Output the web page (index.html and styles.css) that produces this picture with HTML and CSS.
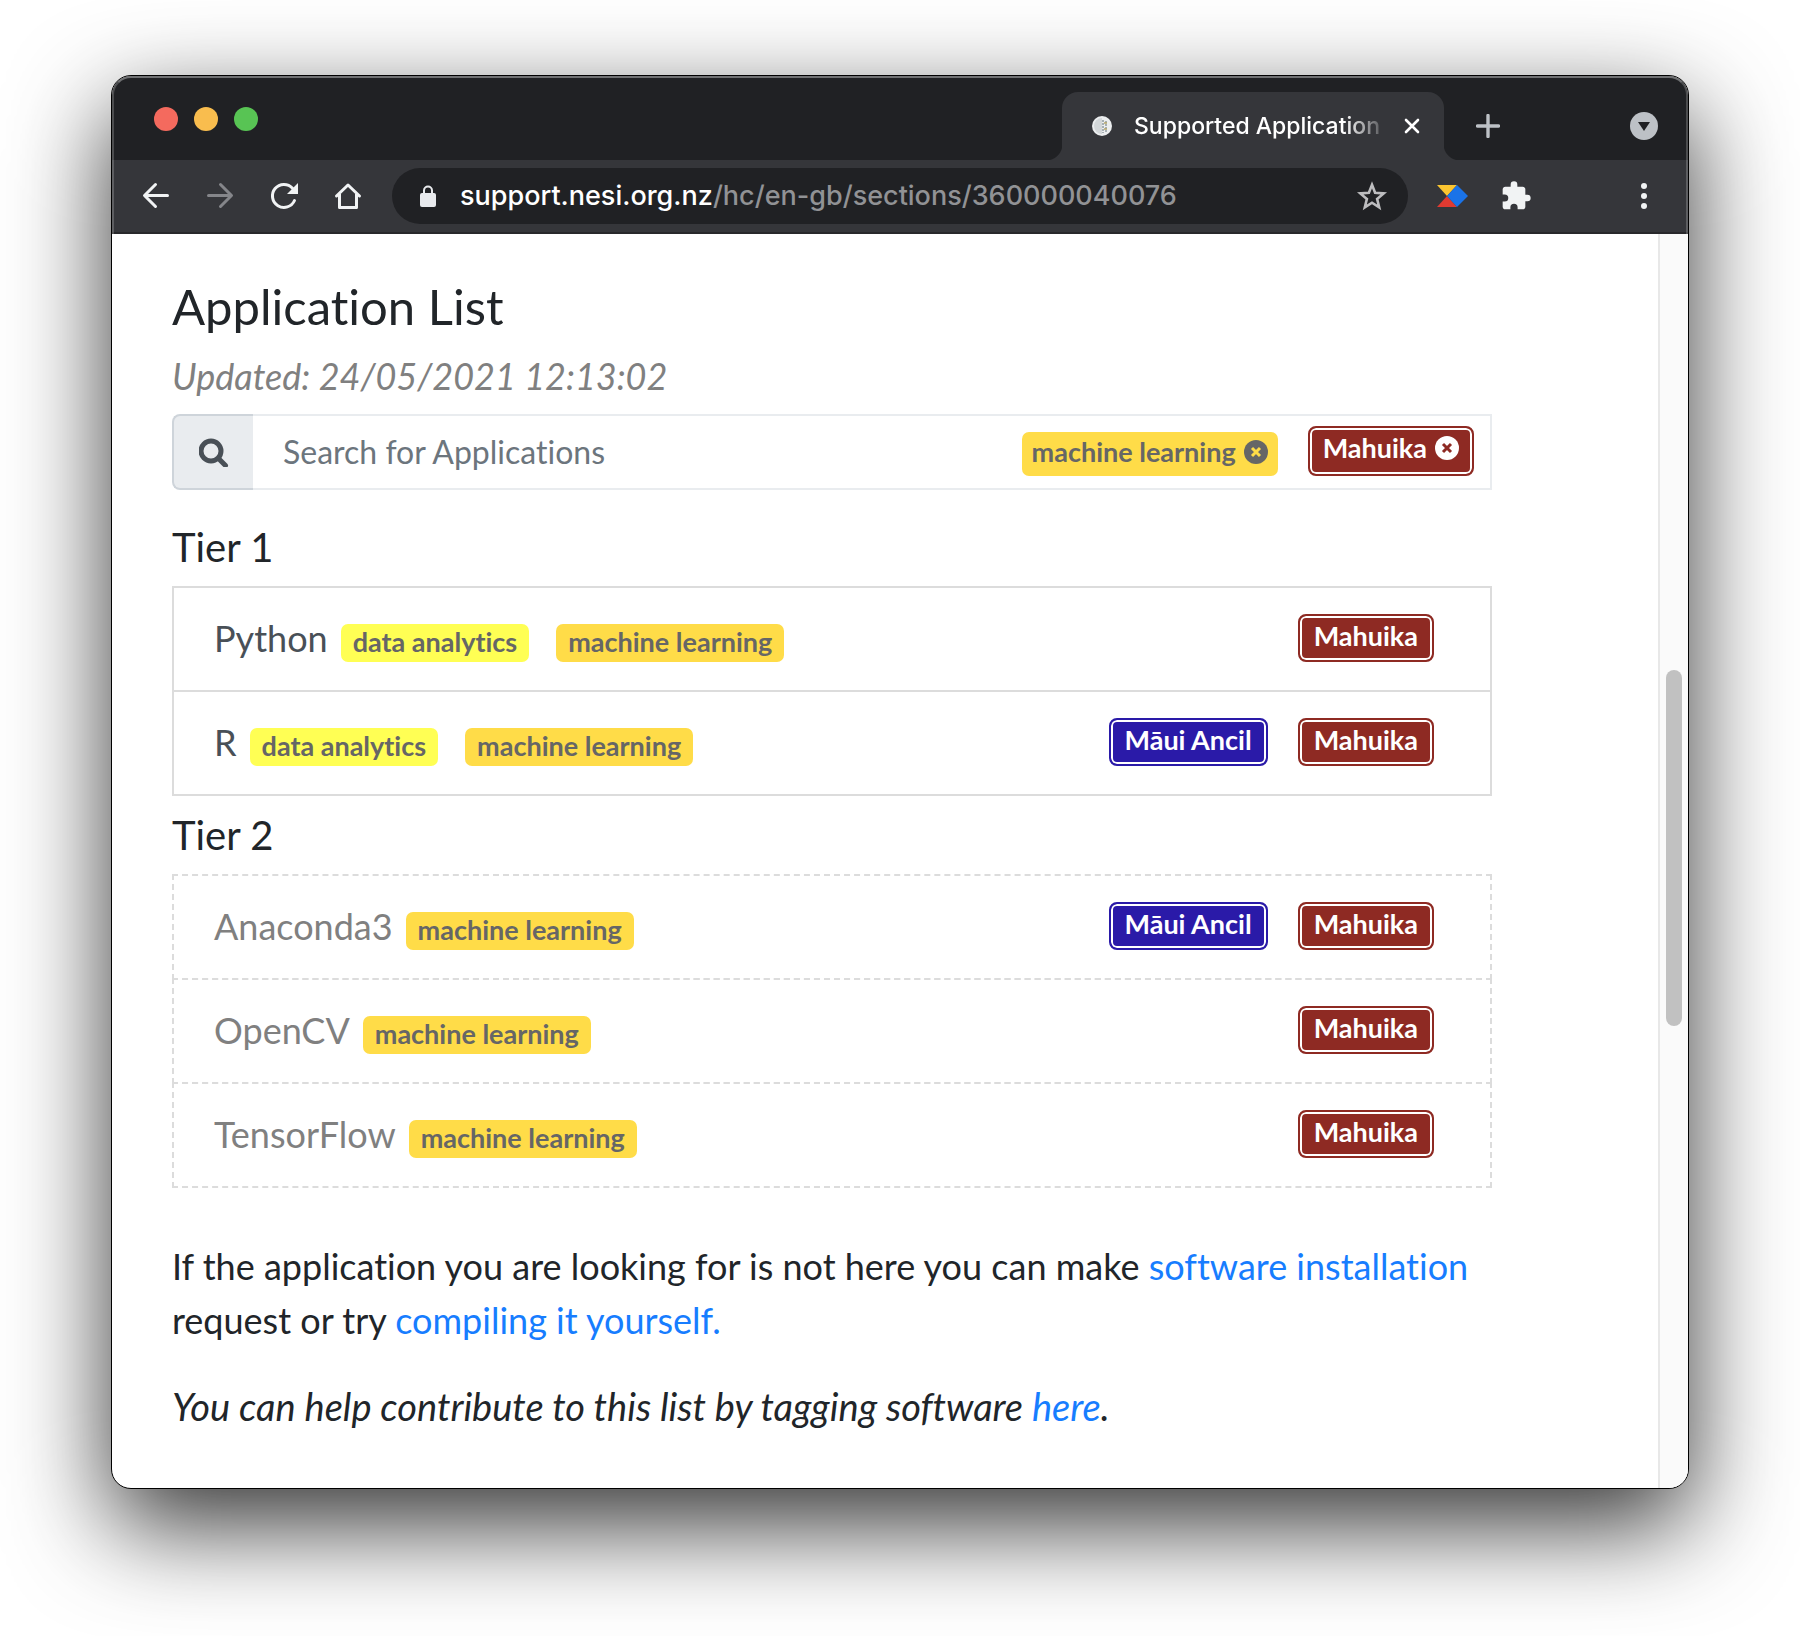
FILE: index.html
```html
<!DOCTYPE html>
<html lang="en-GB">
<head>
<meta charset="utf-8">
<title>Supported Applications</title>
<link rel="stylesheet" href="styles.css">
</head>
<body>
<div class="window">
  <header class="chrome">
    <div class="tabstrip">
      <div class="lights">
        <span class="light light-close"></span>
        <span class="light light-min"></span>
        <span class="light light-max"></span>
      </div>
      <div class="tab">
        <svg class="favicon" viewBox="0 0 20 20" width="20" height="20" aria-hidden="true">
          <circle cx="10" cy="10" r="10" fill="#eceeef"/>
          <path d="M10 2a8 8 0 0 0 0 16z" fill="#d3d7d9"/>
          <path d="M11 4v13M14 5v11" stroke="#8f9aa0" stroke-width="1.5" stroke-dasharray="2 1"/>
          <path d="M12 7h3M12 13h3" stroke="#b7a66a" stroke-width="1.5"/>
        </svg>
        <span class="tab-title">Supported Application</span>
        <button class="icon-button tab-close" aria-label="Close tab">
          <svg viewBox="0 0 16 16" width="16" height="16"><path d="M2 2l12 12M14 2L2 14" stroke="#fff" stroke-width="2.6" stroke-linecap="round"/></svg>
        </button>
      </div>
      <button class="icon-button new-tab" aria-label="New tab">
        <svg viewBox="0 0 24 24" width="24" height="24"><path d="M12 1.500v21M1.500 12h21" stroke="#bdc1c6" stroke-width="3.400" stroke-linecap="round"/></svg>
      </button>
      <button class="icon-button tab-search" aria-label="Search tabs">
        <svg viewBox="0 0 28 28" width="28" height="28"><circle cx="14" cy="14" r="14" fill="#bdc1c6"/><path d="M8 10h12l-6 9z" fill="#202124"/></svg>
      </button>
    </div>
    <nav class="toolbar" aria-label="Browser">
      <div class="nav-buttons">
        <button class="icon-button" aria-label="Back">
          <svg viewBox="0 0 32 32" width="32" height="32" fill="none" stroke="#f1f3f4" stroke-width="3" stroke-linecap="round" stroke-linejoin="round"><path d="M27.500 15.500H5M15.500 4.500l-11 11 11 11"/></svg>
        </button>
        <button class="icon-button" aria-label="Forward" disabled>
          <svg viewBox="0 0 32 32" width="32" height="32" fill="none" stroke="#85868a" stroke-width="3" stroke-linecap="round" stroke-linejoin="round"><path d="M4.500 15.500H27M16.500 4.500l11 11-11 11"/></svg>
        </button>
        <button class="icon-button" aria-label="Reload">
          <svg viewBox="0 0 32 32" width="32" height="32"><path d="M26.500 20.500A11.500 11.500 0 1 1 24.500 8.200" fill="none" stroke="#f1f3f4" stroke-width="3"  stroke-linecap="round"/><path d="M30 3v11H19z" fill="#f1f3f4"/></svg>
        </button>
        <button class="icon-button" aria-label="Home">
          <svg viewBox="0 0 32 32" width="32" height="32" fill="none" stroke="#f1f3f4" stroke-width="3" stroke-linejoin="round" stroke-linecap="round"><path d="M4.500 16L16 5l11.500 11M7.500 14v13.500h17V14"/></svg>
        </button>
      </div>
      <div class="omnibox">
        <svg class="lock" viewBox="0 0 16 22" width="16" height="22" aria-hidden="true"><rect y="8" width="16" height="14" rx="2" fill="#e8eaed"/><path d="M4 9V5.500a4 4 0 0 1 8 0V9" fill="none" stroke="#e8eaed" stroke-width="2"/></svg>
        <div class="url"><span class="url-host">support.nesi.org.nz</span>/hc/en-gb/sections/360000040076</div>
        <button class="icon-button" aria-label="Bookmark">
          <svg viewBox="0 0 32 32" width="32" height="32" fill="none" stroke="#bdbdbf" stroke-width="2.600"><path d="M16 4.800l3.100 8 8.600.6-6.600 5.500 2.100 8.400-7.200-4.600-7.200 4.600 2.100-8.400-6.600-5.500 8.600-.6z"/></svg>
        </button>
      </div>
      <div class="extensions">
        <button class="icon-button" aria-label="Extension">
          <svg viewBox="0 0 32 32" width="32" height="32"><path d="M1 5h20L11 16z" fill="#fbc530"/><path d="M1 27h20L11 16z" fill="#df3a31"/><path d="M21 5l11 11-11 11-10-11z" fill="#1a73e8"/></svg>
        </button>
        <button class="icon-button" aria-label="Extensions">
          <svg viewBox="0 0 24 24" width="32" height="32"><path fill="#f1f3f4" d="M20.500 11H19V7c0-1.100-.9-2-2-2h-4V3.500a2.500 2.500 0 0 0-5 0V5H4c-1.100 0-2 .9-2 2v3.800h1.500a2.700 2.700 0 0 1 0 5.400H2V20c0 1.100.9 2 2 2h3.800v-1.500a2.700 2.700 0 0 1 5.400 0V22H17c1.100 0 2-.9 2-2v-4h1.500a2.500 2.500 0 0 0 0-5z"/></svg>
        </button>
      </div>
      <button class="icon-button" aria-label="Menu">
        <svg viewBox="0 0 32 32" width="32" height="32" fill="#f1f3f4"><circle cx="16" cy="6" r="3"/><circle cx="16" cy="16" r="3"/><circle cx="16" cy="26" r="3"/></svg>
      </button>
    </nav>
  </header>
  <div class="viewport">
    <main class="page">
      <h1 class="title">Application List</h1>
      <p class="updated">Updated: 24/05/2021 12:13:02</p>
      <form class="search" role="search">
        <label class="search-label" for="search" aria-label="Search">
          <svg viewBox="0 0 30 30" width="30" height="30" aria-hidden="true"><circle cx="12" cy="14" r="10" fill="none" stroke="#495057" stroke-width="5"/><path d="M19.500 21.500l7 7" stroke="#495057" stroke-width="5" stroke-linecap="round"/></svg>
        </label>
        <div class="search-field">
          <input class="search-input" id="search" type="text" placeholder="Search for Applications">
          <button class="tag tag-ml tag-filter" type="button">machine learning
            <svg viewBox="0 0 24 24" width="24" height="24"><circle cx="12" cy="12" r="12" fill="#666"/><path d="M8 8l8 8M16 8l-8 8" stroke="#ffdc48" stroke-width="3"/></svg>
          </button>
          <button class="badge badge-mahuika badge-filter" type="button">Mahuika
            <svg viewBox="0 0 24 24" width="24" height="24"><circle cx="12" cy="12" r="12" fill="#fff"/><path d="M8 8l8 8M16 8l-8 8" stroke="#8e2a23" stroke-width="3"/></svg>
          </button>
        </div>
      </form>

      <h2 class="tier">Tier 1</h2>
      <ul class="apps">
        <li class="app"><span class="app-name">Python</span><button class="tag tag-data">data analytics</button><button class="tag tag-ml">machine learning</button>
          <span class="clusters"><button class="badge badge-mahuika">Mahuika</button></span></li>
        <li class="app"><span class="app-name">R</span><button class="tag tag-data">data analytics</button><button class="tag tag-ml">machine learning</button>
          <span class="clusters"><button class="badge badge-maui">Māui Ancil</button><button class="badge badge-mahuika">Mahuika</button></span></li>
      </ul>

      <h2 class="tier">Tier 2</h2>
      <ul class="apps apps-minor">
        <li class="app"><span class="app-name">Anaconda3</span><button class="tag tag-ml">machine learning</button>
          <span class="clusters"><button class="badge badge-maui">Māui Ancil</button><button class="badge badge-mahuika">Mahuika</button></span></li>
        <li class="app"><span class="app-name">OpenCV</span><button class="tag tag-ml">machine learning</button>
          <span class="clusters"><button class="badge badge-mahuika">Mahuika</button></span></li>
        <li class="app"><span class="app-name">TensorFlow</span><button class="tag tag-ml">machine learning</button>
          <span class="clusters"><button class="badge badge-mahuika">Mahuika</button></span></li>
      </ul>

      <div class="notes">
        <p class="note">If the application you are looking for is not here you can make <a href="#install">software installation</a> request or try <a href="#compile">compiling it yourself.</a></p>
        <p class="note note-help">You can help contribute to this list by tagging software <a href="#tag">here</a>.</p>
      </div>
    </main>
    <div class="scrollbar"><div class="thumb"></div></div>
  </div>
</div>
</body>
</html>
```
FILE: styles.css
```css
* { box-sizing: border-box; }

body {
  margin: 0;
  padding: 75px 111px 147px;
  background: #fff;
  font-family: Lato, "Liberation Sans", sans-serif;
  font-variant-ligatures: none;
  color: #212529;
}

button {
  margin: 0;
  padding: 0;
  border: 0;
  background: none;
  font: inherit;
  font-variant-ligatures: none;
  color: inherit;
}

svg { display: block; }

.window {
  border: 1px solid #000;
  border-radius: 20px;
  overflow: hidden;
  background: #fff;
  box-shadow: 0 36px 100px rgba(0, 0, 0, 0.8);
}

/* Browser frame */

.chrome {
  position: relative;
  background: #202124;
  font-family: Inter, "Liberation Sans", sans-serif;
  font-weight: 500;
}

.chrome::after {
  content: "";
  position: absolute;
  inset: 0;
  border: 2px solid rgba(255, 255, 255, 0.2);
  border-top-color: rgba(255, 255, 255, 0.36);
  border-bottom: 0;
  border-radius: 19px 19px 0 0;
  pointer-events: none;
}

.tabstrip {
  display: flex;
  align-items: flex-end;
  height: 84px;
  padding: 0 30px 0 42px;
}

.lights {
  display: flex;
  gap: 16px;
  margin-right: auto;
  padding-bottom: 29px;
}

.light {
  width: 24px;
  height: 24px;
  border-radius: 50%;
}

.light-close { background: #f46a5e; }
.light-min { background: #f9bd4e; }
.light-max { background: #58c454; }

.tab {
  position: relative;
  display: flex;
  align-items: center;
  width: 382px;
  height: 68px;
  padding: 0 24px 0 30px;
  border-radius: 16px 16px 0 0;
  background: #35363a;
}

.tab::before,
.tab::after {
  content: "";
  position: absolute;
  bottom: 0;
  width: 16px;
  height: 16px;
}

.tab::before {
  right: 100%;
  background: radial-gradient(circle at 0 0, #202124 16px, #35363a 17px);
}

.tab::after {
  left: 100%;
  background: radial-gradient(circle at 100% 0, #202124 16px, #35363a 17px);
}

.favicon { margin-right: 22px; }

.tab-title {
  flex: 1;
  white-space: nowrap;
  font-size: 23px;
  line-height: 32px;
  color: #fff;
  mask-image: linear-gradient(to right, #000 210px, transparent 256px);
}

.tab-close { margin-left: 14px; }
.new-tab { margin: 0 130px 22px 32px; }
.tab-search { margin-bottom: 20px; }

.toolbar {
  display: flex;
  align-items: center;
  gap: 28px;
  height: 74px;
  padding: 6px 28px;
  background: #35363a;
  border-bottom: 2px solid #28282b;
}

.nav-buttons,
.extensions {
  display: flex;
  gap: 32px;
}

.extensions { margin-right: 68px; }

.omnibox {
  flex: 1;
  display: flex;
  align-items: center;
  height: 56px;
  padding: 0 20px 0 28px;
  border-radius: 28px;
  background: #202124;
}

.url {
  flex: 1;
  margin-left: 24px;
  font-size: 27px;
  line-height: 40px;
  white-space: nowrap;
  color: #919295;
}

.url-host { color: #fff; }

/* Page */

.viewport {
  display: flex;
}

.page {
  flex: 1;
  padding: 43px 166px 23px 60px;
}

.scrollbar {
  width: 30px;
  padding: 436px 6px 0;
  border-left: 2px solid #e8e8e8;
  background: #fafafa;
}

.thumb {
  height: 356px;
  border-radius: 8px;
  background: #c1c1c1;
}

.title {
  margin: 0;
  font-size: 49px;
  font-weight: 400;
  line-height: 58px;
}

.updated {
  margin: 14px 0 11px;
  font-size: 36px;
  font-style: italic;
  line-height: 54px;
  color: #808080;
}

.search {
  display: flex;
  height: 76px;
  margin: 0 0 33px;
}

.search-label {
  display: flex;
  align-items: center;
  justify-content: center;
  width: 81px;
  border: 2px solid #ced4da;
  border-right: 0;
  border-radius: 8px 0 0 8px;
  background: #e9ecef;
}

.search-field {
  flex: 1;
  display: flex;
  align-items: flex-end;
  padding: 0 16px 12px 30px;
  border: 2px solid #e9ecef;
  border-left: 0;
}

.search-input {
  flex: 1;
  min-width: 0;
  height: 48px;
  padding: 0;
  border: 0;
  outline: 0;
  background: none;
  font: 400 32px/48px Lato, "Liberation Sans", sans-serif;
  font-variant-ligatures: none;
  color: #495057;
}

.search-input::placeholder { color: #6c757d; opacity: 1; }

.tag {
  padding: 0 12px 2px;
  border-radius: 7px;
  font-size: 27px;
  font-weight: 700;
  line-height: 36px;
  white-space: nowrap;
  color: #666;
}

.tag-data { background: #ffff54; }
.tag-ml { background: #ffdc48; }

.badge {
  padding: 2px 14px 6px;
  border: 2px solid;
  border-radius: 8px;
  box-shadow: inset 0 0 0 2px #fff;
  font-size: 27px;
  font-weight: 700;
  line-height: 36px;
  white-space: nowrap;
  color: #fff;
}

.badge-mahuika { background: #8e2a23; border-color: #8e2a23; }
.badge-maui { background: #2a1aa8; border-color: #2a1aa8; }

.tag-filter,
.badge-filter {
  display: flex;
  align-items: center;
  gap: 8px;
}

.tag-filter {
  margin-right: 30px;
  padding: 0 10px 4px;
  line-height: 40px;
}

.badge-filter {
  padding: 2px 13px 8px;
}

.tier {
  margin: 0 0 15px;
  font-size: 40px;
  font-weight: 400;
  line-height: 48px;
}

.apps {
  margin: 0 0 15px;
  padding: 0;
  list-style: none;
}

.app {
  display: flex;
  align-items: baseline;
  height: 106px;
  padding: 23px 56px 0 40px;
  border: 2px solid #dcdcdc;
}

.app + .app { margin-top: -2px; }

.app-name {
  margin-right: 13px;
  font-size: 36px;
  line-height: 54px;
  color: #495057;
}

.app .tag + .tag { margin-left: 27px; }

.apps-minor .app { border-style: dashed; }
.apps-minor .app-name { color: #808080; }

.clusters {
  display: flex;
  align-self: flex-start;
  align-items: center;
  gap: 30px;
  height: 54px;
  margin-left: auto;
}

.notes { padding-top: 36px; }

.note {
  margin: 0 0 32px;
  font-size: 36px;
  line-height: 54px;
}

.note-help {
  font-size: 38px;
  font-style: italic;
}

.note a {
  color: #177dff;
  text-decoration: none;
}
```
